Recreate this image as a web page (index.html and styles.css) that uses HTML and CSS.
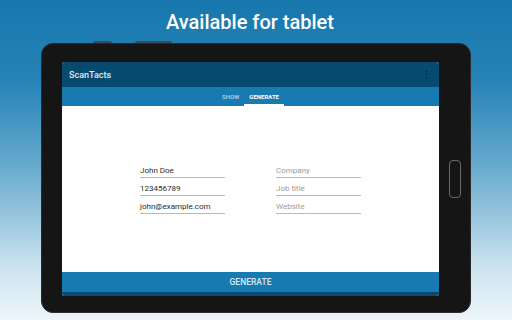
FILE: index.html
```html
<!DOCTYPE html>
<html lang="en">
<head>
  <meta charset="UTF-8" />
  <meta name="viewport" content="width=device-width, initial-scale=1.0"/>
  <title>ScanTacts - Available for tablet</title>
  <link rel="stylesheet" href="styles.css">
</head>
<body>

  <h1 class="headline">Available for tablet</h1>

  <div class="tablet">
    <span class="side-key key-a"></span>
    <span class="side-key key-b"></span>

    <div class="screen">
      <div class="toolbar">
        <span class="app-title">ScanTacts</span>
        <span class="overflow"><i></i><i></i><i></i></span>
      </div>

      <div class="tabs">
        <span class="tab">SHOW</span>
        <span class="tab active">GENERATE</span>
      </div>

      <div class="content">
        <div class="form-grid">
          <div class="field">John Doe</div>
          <div class="field hint">Company</div>
          <div class="field">123456789</div>
          <div class="field hint">Job title</div>
          <div class="field">john@example.com</div>
          <div class="field hint">Website</div>
        </div>
      </div>

      <div class="generate-btn">GENERATE</div>
      <div class="nav-strip"></div>
    </div>

    <div class="side">
      <span class="home-btn"></span>
    </div>
  </div>

</body>
</html>
```

FILE: styles.css
```css
html, body {
  margin: 0;
  padding: 0;
}

body {
  width: 512px;
  height: 320px;
  overflow: hidden;
  background: linear-gradient(#1777ad 0%, #2683b7 25%, #62a7cc 50%, #9fcae0 70%, #c8e1ed 82%, #edf5f9 100%);
  font-family: 'Roboto', 'Liberation Sans', sans-serif;
}

.headline {
  margin: 0;
  padding: 11px 12px 0 0;
  height: 22px;
  line-height: 22px;
  text-align: center;
  color: #ffffff;
  font-family: 'Roboto', 'Liberation Sans', sans-serif;
  font-size: 20px;
  font-weight: 500;
}

.tablet {
  position: relative;
  box-sizing: border-box;
  width: 430px;
  height: 270px;
  margin: 10px 0 0 41px;
  padding: 18px 0 16px 20px;
  display: flex;
  background-color: #151515;
  border: 1px solid #2a2a2a;
  border-radius: 12px;
}

.side-key {
  position: absolute;
  top: -3px;
  height: 2px;
  background-color: #3d4a55;
  border-radius: 2px 2px 0 0;
}

.key-a {
  left: 51px;
  width: 19px;
}

.key-b {
  left: 93px;
  width: 37px;
}

.screen {
  width: 377px;
  display: flex;
  flex-direction: column;
  border-radius: 3px;
  overflow: hidden;
  background-color: #ffffff;
}

.toolbar {
  height: 25px;
  display: flex;
  align-items: center;
  justify-content: space-between;
  padding: 0 12px 0 7px;
  background-color: #064a70;
}

.app-title {
  color: #e3ecf2;
  font-size: 9px;
  font-weight: 500;
}

.overflow {
  display: flex;
  flex-direction: column;
  gap: 2px;
}

.overflow i {
  width: 1px;
  height: 1px;
  background-color: #111;
}

.tabs {
  height: 19px;
  display: flex;
  justify-content: center;
  background-color: #177ab0;
}

.tab {
  box-sizing: border-box;
  height: 19px;
  padding: 0 5px;
  line-height: 19px;
  font-size: 6px;
  font-weight: bold;
  color: #a9c9dd;
}

.tab.active {
  color: #ffffff;
  border-bottom: 2px solid #ffffff;
}

.content {
  flex: 1;
  display: flex;
  justify-content: center;
  padding-top: 54px;
}

.form-grid {
  display: grid;
  grid-template-columns: 85px 85px;
  column-gap: 51px;
  align-content: start;
}

.field {
  box-sizing: border-box;
  height: 18px;
  display: flex;
  align-items: flex-end;
  padding-bottom: 1px;
  line-height: 10px;
  font-size: 8px;
  color: #2b2b2b;
  border-bottom: 1px solid #b9b9b9;
}

.field.hint {
  color: #9b9b9b;
}

.generate-btn {
  height: 20px;
  line-height: 20px;
  text-align: center;
  background-color: #177ab0;
  color: #dce9f1;
  font-size: 8.5px;
  font-weight: 500;
}

.nav-strip {
  height: 4px;
  background-color: #084c72;
}

.side {
  flex: 1;
  display: flex;
  align-items: center;
  justify-content: center;
}

.home-btn {
  width: 10px;
  height: 36px;
  border: 1px solid #6a6a6a;
  border-radius: 4px;
}
```
